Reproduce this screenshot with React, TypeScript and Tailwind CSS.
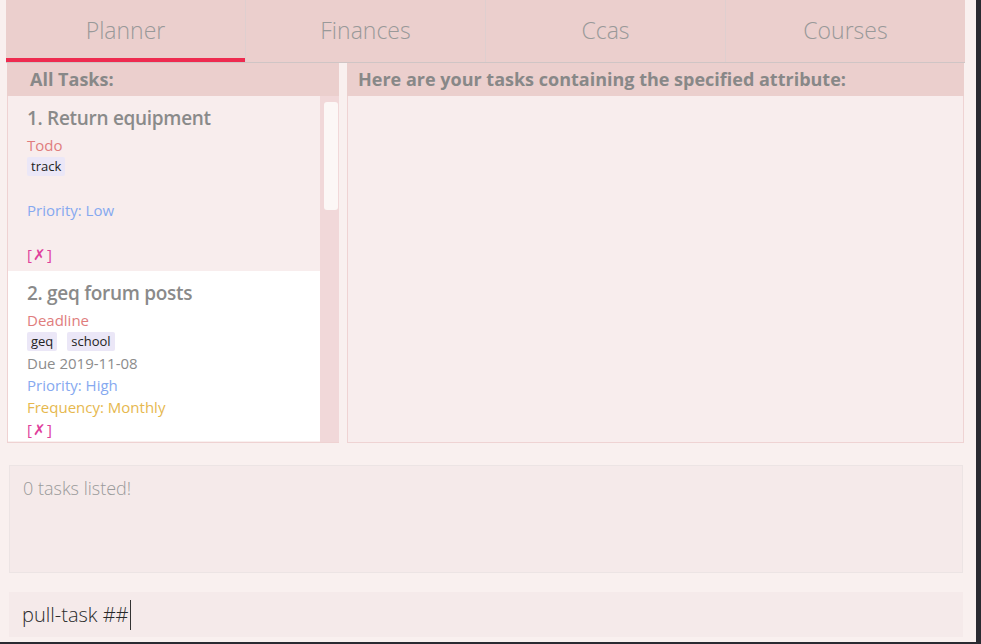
const tabs = ["Planner", "Finances", "Ccas", "Courses"];

type Task = {
  title: string;
  type: string;
  tags: string[];
  due?: string;
  priority: string;
  frequency?: string;
  highlight?: boolean;
};

const tasks: Task[] = [
  { title: "1. Return equipment", type: "Todo", tags: ["track"], priority: "Low" },
  {
    title: "2. geq forum posts",
    type: "Deadline",
    tags: ["geq", "school"],
    due: "Due 2019-11-08",
    priority: "High",
    frequency: "Monthly",
    highlight: true,
  },
];

function TaskCard({ task }: { task: Task }) {
  return (
    <div
      className={`pl-[19px] pt-[7px] ${task.highlight ? "bg-white h-[170px]" : "bg-[#f8eded] h-[175px]"}`}
    >
      <div className="text-[19px] font-semibold text-[#8a8a8a] leading-[30px] tracking-[-0.3px]">
        {task.title}
      </div>
      <div className="text-[15px] text-[#e07d7d] leading-[22px] mt-[1px]">{task.type}</div>
      <div className="flex gap-[10px] h-[21px] items-center">
        {task.tags.map((t) => (
          <span
            key={t}
            className="bg-[#ebe7f7] text-[#222] text-[13px] leading-[19px] px-[4px] rounded-[2px]"
          >
            {t}
          </span>
        ))}
      </div>
      <div className="text-[15px] text-[#8c8c8c] leading-[22px] h-[22px]">{task.due ?? ""}</div>
      <div className="text-[15px] text-[#86a9f0] leading-[22px]">Priority: {task.priority}</div>
      <div className="text-[15px] text-[#e6b84e] leading-[22px] h-[22px]">
        {task.frequency ? `Frequency: ${task.frequency}` : ""}
      </div>
      <div className="text-[15px] text-[#e0409c] leading-[22px] tracking-[1px]">[✗]</div>
    </div>
  );
}

export default function App() {
  return (
    <div className="w-[981px] h-[644px] bg-[#2a2a31] overflow-hidden font-['Open_Sans',sans-serif]">
      <div className="w-[976px] h-[642px] bg-[#f9f0ef] flex flex-col">
        {/* Tabs */}
        <div className="ml-[6px] w-[959px] h-[63px] flex bg-[#ebcfcd] border-b border-[#cfc5c5]">
          {tabs.map((t, i) => (
            <div
              key={t}
              className={`flex-1 flex items-center justify-center relative text-[23px] font-light text-[#999] ${i > 0 ? "border-l border-[#dfcfcf]" : ""}`}
            >
              <span className="-mt-[2px]">{t}</span>
              {i === 0 && <div className="absolute left-0 right-0 bottom-0 h-[4px] bg-[#ee2b4f]" />}
            </div>
          ))}
        </div>

        {/* Content */}
        <div className="flex h-[380px] ml-[7px] gap-[8px]">
          <div className="w-[332px] flex flex-col border-b border-[#efd2d2]">
            <div className="h-[33px] bg-[#ebcfcd] flex items-center pl-[23px] text-[18px] font-bold text-[#888]">
              All Tasks:
            </div>
            <div className="flex flex-1 border-l border-[#efd2d2] overflow-hidden">
              <div className="flex-1">
                {tasks.map((t) => (
                  <TaskCard key={t.title} task={t} />
                ))}
              </div>
              <div className="w-[19px] bg-[#f1d8d9] pt-[6px] pl-[4px]">
                <div className="w-[14px] h-[108px] bg-[#fcf7f6] rounded-[3px]" />
              </div>
            </div>
          </div>
          <div className="w-[617px] flex flex-col">
            <div className="h-[33px] bg-[#ebcfcd] flex items-center pl-[11px] text-[18px] font-bold text-[#888]">
              Here are your tasks containing the specified attribute:
            </div>
            <div className="flex-1 bg-[#f8eded] border border-t-0 border-[#efd3d3]" />
          </div>
        </div>

        {/* Result display */}
        <div className="mt-[22px] ml-[9px] w-[954px] h-[108px] bg-[#f5eaea] border border-[#ece4e4] px-[13px] pt-[9px]">
          <div className="text-[18px] font-light text-[#9a9a9a]">0 tasks listed!</div>
        </div>

        {/* Command box */}
        <div className="mt-[19px] ml-[9px] w-[954px] h-[45px] bg-[#f5eaea] flex items-center px-[13px]">
          <span className="text-[20px] font-light text-[#2a2a2a]">pull-task ##</span>
          <span className="w-[1px] h-[30px] bg-[#333] ml-[1px]" />
        </div>
      </div>
    </div>
  );
}
